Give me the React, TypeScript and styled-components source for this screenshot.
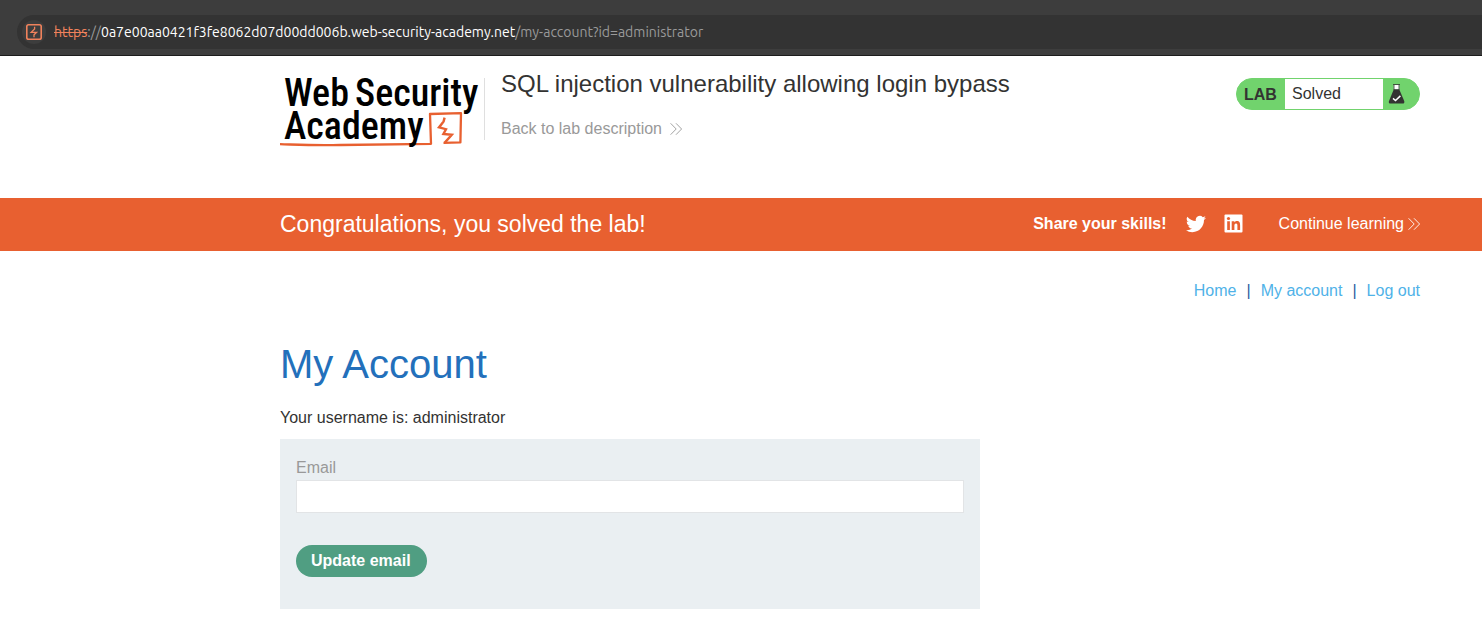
import React from 'react';
import styled, { createGlobalStyle } from 'styled-components';

const GlobalStyle = createGlobalStyle`
  *, *::before, *::after { box-sizing: border-box; }
  body {
    margin: 0;
    background: #fff;
    color: #333332;
    font-family: "Liberation Sans", Arial, sans-serif;
    font-size: 16px;
    line-height: 20px;
  }
  h1, h2, h3, p { margin: 0; font-weight: 400; }
  a { text-decoration: none; }
`;

const BrowserBar = styled.div`
  display: flex;
  padding: 15px 0 6px 17px;
  background: #3d3d3d;
  border-bottom: 1px solid #1c1c1c;
`;

const AddressField = styled.div`
  display: flex;
  flex: 1;
  align-items: center;
  gap: 8px;
  height: 34px;
  padding-left: 5px;
  border-radius: 17px 0 0 17px;
  background: #333333;
  overflow: hidden;
`;

const SiteBadge = styled.span`
  display: flex;
  align-items: center;
  justify-content: center;
  width: 24px;
  height: 24px;
  border-radius: 50%;
  background: #3d3d3d;
`;

const Url = styled.span`
  font-family: Ubuntu, "DejaVu Sans Condensed", "DejaVu Sans", sans-serif;
  font-size: 14px;
  white-space: nowrap;
  color: #9a9a9a;
`;

const Scheme = styled.span`
  color: #f0825c;
  text-decoration: line-through;
`;

const Host = styled.span`
  color: #fff;
`;

const Container = styled.div`
  padding: 0 62px 0 280px;
`;

const LabHeader = styled(Container).attrs({ as: 'header' })`
  display: flex;
  align-items: flex-start;
  padding-top: 22px;
  padding-bottom: 50px;
`;

const LogoLink = styled.a`
  display: block;
  width: 204px;
  height: 70px;
  flex: none;
`;

const LogoArt = styled.svg`
  display: block;
  overflow: visible;
  font-family: "Roboto Condensed", Roboto, sans-serif;
  font-size: 38px;
  font-weight: 500;
`;

const TitleBlock = styled.div`
  flex: 1;
  height: 62px;
  padding-left: 16px;
  border-left: 1px solid #dfdfdf;
`;

const LabTitle = styled.h2`
  font-size: 24px;
  line-height: 12px;
`;

const BackLink = styled.a`
  display: inline-flex;
  align-items: center;
  gap: 8px;
  margin-top: 29px;
  color: #999;
`;

const LabStatus = styled.div`
  display: flex;
  height: 32px;
  border: 1px solid #71d36d;
  border-radius: 16px;
  background: #71d36d;
  line-height: 30px;
  overflow: hidden;
`;

const LabTag = styled.span`
  width: 48px;
  padding-left: 7px;
  font-weight: 700;
  line-height: 32px;
`;

const LabState = styled.span`
  width: 98px;
  padding-left: 7px;
  background: #fff;
`;

const LabIcon = styled.span`
  width: 36px;
  padding: 5px 0 0 5px;
`;

const Banner = styled(Container).attrs({ as: 'section' })`
  display: flex;
  align-items: center;
  height: 53px;
  padding-bottom: 2px;
  background: #e86030;
  color: #fff;
`;

const BannerTitle = styled.h3`
  flex: 1;
  font-size: 23px;
`;

const ShareLabel = styled.span`
  margin-right: 19px;
  font-weight: 700;
`;

const ShareLink = styled.a`
  display: flex;
  margin-right: 18px;
  color: #fff;
`;

const ContinueLink = styled.a`
  display: flex;
  align-items: center;
  gap: 4px;
  margin-left: 18px;
  color: #fff;
`;

const AccountNav = styled(Container).attrs({ as: 'nav' })`
  display: flex;
  justify-content: flex-end;
  gap: 10px;
  margin-top: 30px;
  color: #2a5da0;
`;

const NavLink = styled.a`
  color: #4fb2e8;
`;

const Main = styled(Container).attrs({ as: 'main' })`
  padding-top: 39px;
  padding-bottom: 12px;
`;

const PageTitle = styled.h1`
  font-size: 40px;
  line-height: 48px;
  color: #2370bb;
`;

const Username = styled.p`
  margin-top: 20px;
`;

const EmailForm = styled.form`
  display: flex;
  flex-direction: column;
  align-items: flex-start;
  max-width: 700px;
  margin-top: 11px;
  padding: 19px 16px 32px;
  background: #eaeff2;
`;

const FieldLabel = styled.label`
  color: #999;
`;

const EmailInput = styled.input`
  width: 100%;
  height: 33px;
  margin-top: 2px;
  padding: 0 8px;
  border: 1px solid #e2e4e6;
  border-radius: 0;
  background: #fff;
  font: inherit;
  color: inherit;
`;

const SubmitButton = styled.button`
  height: 32px;
  margin-top: 32px;
  padding: 0 16px 0 15px;
  border: 0;
  border-radius: 16px;
  background: #509e82;
  color: #fff;
  font: inherit;
  font-weight: 700;
`;

const Chevrons = () => (
  <svg width="12" height="12" viewBox="0 0 12 12" fill="none" stroke="currentColor" strokeWidth="0.9" aria-hidden="true">
    <path d="M0.6 0.3 6.2 6 0.6 11.7M6 0.3 11.6 6 6 11.7" />
  </svg>
);

const ExtensionIcon = () => (
  <svg width="16" height="16" viewBox="0 0 16 16" fill="none" stroke="#f0825c" aria-hidden="true">
    <rect x="0.8" y="0.8" width="14.4" height="14.4" rx="1.8" strokeWidth="1.6" />
    <path d="M8.6 2.8V5L5.2 8.3H10.6L8 10.8V13.2" strokeWidth="1.3" />
  </svg>
);

const AcademyLogo = () => (
  <LogoArt width="204" height="70" viewBox="0 0 204 70" role="img" aria-label="Web Security Academy">
    <text x="4" y="28">Web</text>
    <text x="75" y="28">Security</text>
    <path
      d="M0 66.2C20 66.8 35 67.6 60 67C90 66.4 120 66.2 151 65.8L150 36L181 35.2L180.4 64.4L163.5 64.8"
      fill="none"
      stroke="#e86030"
      strokeWidth="2.3"
      strokeLinejoin="round"
    />
    <path
      d="M164.6 39.6 163.6 43.4 159 49.4 166 51.2 163.4 56 171.8 56.8 164.8 64.6"
      fill="none"
      stroke="#e86030"
      strokeWidth="2.4"
    />
    <text x="4" y="61">Academy</text>
  </LogoArt>
);

const FlaskIcon = () => (
  <svg width="18" height="20" viewBox="0 0 18 20" aria-hidden="true">
    <path d="M5.8 1h5.4v4.6H5.8z" fill="#fff" />
    <path d="M5 .5h7M6 1v5M11 1v5" fill="none" stroke="#333332" strokeWidth="0.8" />
    <path d="M5.8 5.3h5.4l5 11.7c.5 1.5-.1 2.6-1.4 2.6H2.4C1 19.6.4 18.5 1 17z" fill="#333332" />
    <path d="m5 14.4 2.5 2.1 4.9-4.6" fill="none" stroke="#fff" strokeWidth="1.5" />
  </svg>
);

const TwitterIcon = () => (
  <svg width="20" height="20" viewBox="0 0 24 24" fill="currentColor" aria-hidden="true">
    <path d="M23.95 4.57a10 10 0 0 1-2.82.77 4.96 4.96 0 0 0 2.16-2.72c-.95.56-2 .96-3.13 1.18a4.92 4.92 0 0 0-8.38 4.48C7.69 8.1 4.07 6.13 1.64 3.16a4.92 4.92 0 0 0 1.52 6.57 4.9 4.9 0 0 1-2.23-.61v.06a4.92 4.92 0 0 0 3.95 4.83 5 5 0 0 1-2.21.08 4.94 4.94 0 0 0 4.6 3.42A9.87 9.87 0 0 1 0 19.54a13.99 13.99 0 0 0 7.56 2.21c9.05 0 14-7.5 14-13.98 0-.21 0-.42-.02-.63a9.94 9.94 0 0 0 2.46-2.55z" />
  </svg>
);

const LinkedInIcon = () => (
  <svg width="19" height="19" viewBox="0 0 19 19" aria-hidden="true">
    <rect x="0.5" y="0.5" width="18" height="18" rx="1" fill="#fff" />
    <g fill="#e86030">
      <path d="M3.2 7.3h2.7v8.6H3.2zM7.7 7.3h2.6v1.2c.5-.8 1.4-1.4 2.6-1.4 2.7 0 3.2 1.8 3.2 4.1v4.7h-2.7v-4.2c0-1 0-2.3-1.4-2.3s-1.6 1.1-1.6 2.2v4.3H7.7z" />
      <circle cx="4.5" cy="4.5" r="1.6" />
    </g>
  </svg>
);

export default function App() {
  return (
    <>
      <GlobalStyle />
      <BrowserBar>
        <AddressField>
          <SiteBadge><ExtensionIcon /></SiteBadge>
          <Url>
            <Scheme>https</Scheme>://<Host>0a7e00aa0421f3fe8062d07d00dd006b.web-security-academy.net</Host>/my-account?id=administrator
          </Url>
        </AddressField>
      </BrowserBar>

      <LabHeader>
        <LogoLink href="#"><AcademyLogo /></LogoLink>
        <TitleBlock>
          <LabTitle>SQL injection vulnerability allowing login bypass</LabTitle>
          <BackLink href="#">Back to lab description<Chevrons /></BackLink>
        </TitleBlock>
        <LabStatus>
          <LabTag>LAB</LabTag>
          <LabState>Solved</LabState>
          <LabIcon><FlaskIcon /></LabIcon>
        </LabStatus>
      </LabHeader>

      <Banner>
        <BannerTitle>Congratulations, you solved the lab!</BannerTitle>
        <ShareLabel>Share your skills!</ShareLabel>
        <ShareLink href="#" aria-label="Share on Twitter"><TwitterIcon /></ShareLink>
        <ShareLink href="#" aria-label="Share on LinkedIn"><LinkedInIcon /></ShareLink>
        <ContinueLink href="#">Continue learning<Chevrons /></ContinueLink>
      </Banner>

      <AccountNav>
        <NavLink href="#">Home</NavLink>
        <span>|</span>
        <NavLink href="#">My account</NavLink>
        <span>|</span>
        <NavLink href="#">Log out</NavLink>
      </AccountNav>

      <Main>
        <PageTitle>My Account</PageTitle>
        <Username>Your username is: administrator</Username>
        <EmailForm onSubmit={(event) => event.preventDefault()}>
          <FieldLabel htmlFor="email">Email</FieldLabel>
          <EmailInput id="email" type="email" name="email" />
          <SubmitButton type="submit">Update email</SubmitButton>
        </EmailForm>
      </Main>
    </>
  );
}
